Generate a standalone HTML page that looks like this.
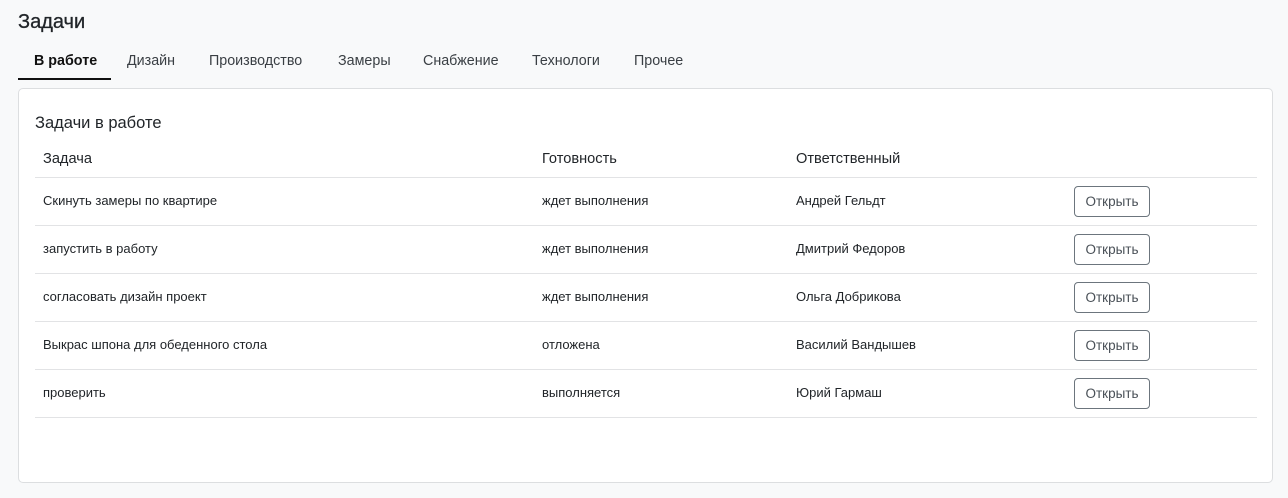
<!DOCTYPE html>
<html><head><meta charset="utf-8"><style>
body{margin:0;background:#f8f9fa;font-family:"Liberation Sans",sans-serif;color:#212529;width:1288px;height:498px;position:relative;overflow:hidden}
.abs{position:absolute;white-space:nowrap}
h1{position:absolute;left:18px;top:8px;margin:0;font-size:20px;font-weight:400;line-height:28px;-webkit-text-stroke:0.3px #212529}
.tab{position:absolute;top:52px;font-size:14.3px;color:#3a3f44;line-height:18px}
.card{position:absolute;left:18px;top:88px;width:1253px;height:393px;background:#fff;border:1px solid #dcdee0;border-radius:5px}
.line{position:absolute;left:35px;width:1222px;height:1px;background:#e2e3e5}
.c{position:absolute;font-size:13px;line-height:16px;white-space:nowrap}
.btn{position:absolute;left:1074px;width:74px;height:29px;border:1px solid #6c757d;border-radius:4px;font-size:13.5px;color:#495057;text-align:center;line-height:29px;background:#fff}
.h{font-size:14.6px}
</style></head><body>
<h1>Задачи</h1>
<div class="tab" style="left:34px;color:#111;font-weight:600">В работе</div>
<div style="position:absolute;left:18px;top:78px;width:93px;height:2px;background:#111"></div>
<div class="tab" style="left:127px">Дизайн</div>
<div class="tab" style="left:209px">Производство</div>
<div class="tab" style="left:338px">Замеры</div>
<div class="tab" style="left:423px">Снабжение</div>
<div class="tab" style="left:532px">Технологи</div>
<div class="tab" style="left:634px">Прочее</div>
<div class="card"></div>
<div class="abs" style="left:35px;top:113px;font-size:16.5px;line-height:20px">Задачи в работе</div>
<div class="abs h" style="left:43px;top:151px">Задача</div>
<div class="abs h" style="left:542px;top:151px">Готовность</div>
<div class="abs h" style="left:796px;top:151px">Ответственный</div>
<div class="line" style="top:177px"></div>
<div class="c" style="left:43px;top:193px">Скинуть замеры по квартире</div><div class="c" style="left:542px;top:193px">ждет выполнения</div><div class="c" style="left:796px;top:193px">Андрей Гельдт</div><div class="btn" style="top:186px">Открыть</div>
<div class="line" style="top:225px"></div>
<div class="c" style="left:43px;top:241px">запустить в работу</div><div class="c" style="left:542px;top:241px">ждет выполнения</div><div class="c" style="left:796px;top:241px">Дмитрий Федоров</div><div class="btn" style="top:234px">Открыть</div>
<div class="line" style="top:273px"></div>
<div class="c" style="left:43px;top:289px">согласовать дизайн проект</div><div class="c" style="left:542px;top:289px">ждет выполнения</div><div class="c" style="left:796px;top:289px">Ольга Добрикова</div><div class="btn" style="top:282px">Открыть</div>
<div class="line" style="top:321px"></div>
<div class="c" style="left:43px;top:337px">Выкрас шпона для обеденного стола</div><div class="c" style="left:542px;top:337px">отложена</div><div class="c" style="left:796px;top:337px">Василий Вандышев</div><div class="btn" style="top:330px">Открыть</div>
<div class="line" style="top:369px"></div>
<div class="c" style="left:43px;top:385px">проверить</div><div class="c" style="left:542px;top:385px">выполняется</div><div class="c" style="left:796px;top:385px">Юрий Гармаш</div><div class="btn" style="top:378px">Открыть</div>
<div class="line" style="top:417px"></div>
</body></html>
